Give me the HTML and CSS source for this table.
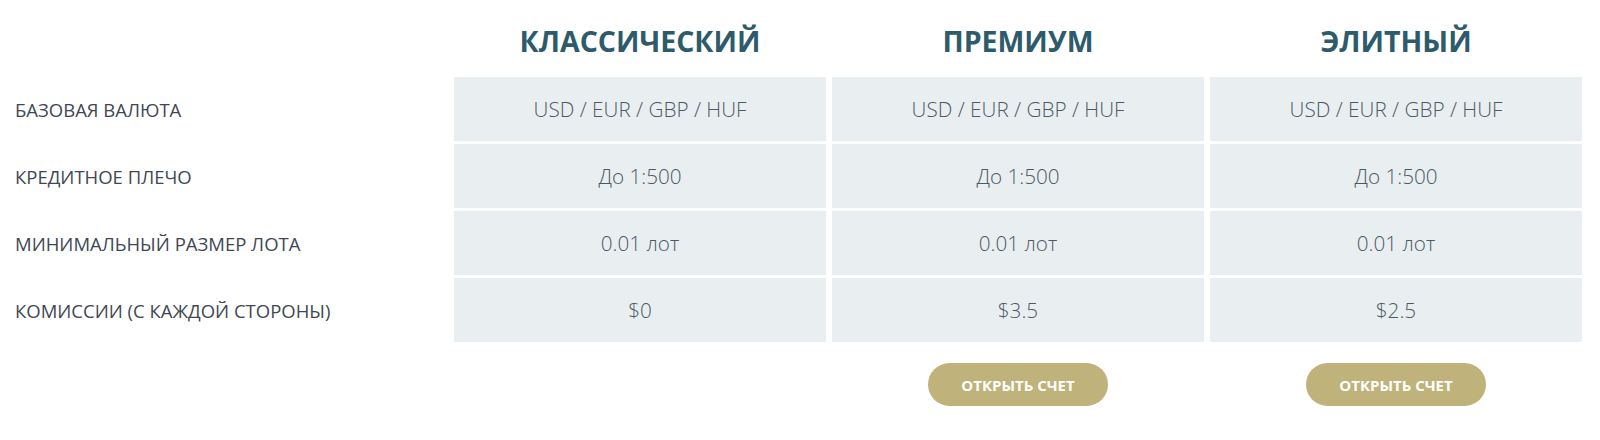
FILE: index.html
```html
<!DOCTYPE html>
<html lang="ru">
<head>
<meta charset="utf-8">
<title>Типы счетов</title>
<link rel="stylesheet" href="styles.css">
</head>
<body>
<div class="table">
  <div class="corner"></div>
  <div class="head">КЛАССИЧЕСКИЙ</div>
  <div class="head">ПРЕМИУМ</div>
  <div class="head">ЭЛИТНЫЙ</div>

  <div class="label">БАЗОВАЯ ВАЛЮТА</div>
  <div class="cell">USD / EUR / GBP / HUF</div>
  <div class="cell">USD / EUR / GBP / HUF</div>
  <div class="cell">USD / EUR / GBP / HUF</div>

  <div class="label">КРЕДИТНОЕ ПЛЕЧО</div>
  <div class="cell">До 1:500</div>
  <div class="cell">До 1:500</div>
  <div class="cell">До 1:500</div>

  <div class="label">МИНИМАЛЬНЫЙ РАЗМЕР ЛОТА</div>
  <div class="cell">0.01 лот</div>
  <div class="cell">0.01 лот</div>
  <div class="cell">0.01 лот</div>

  <div class="label">КОМИССИИ (С КАЖДОЙ СТОРОНЫ)</div>
  <div class="cell">$0</div>
  <div class="cell">$3.5</div>
  <div class="cell">$2.5</div>

  <div class="corner"></div>
  <div class="action"></div>
  <div class="action"><a class="btn" href="#">ОТКРЫТЬ СЧЕТ</a></div>
  <div class="action"><a class="btn" href="#">ОТКРЫТЬ СЧЕТ</a></div>
</div>
</body>
</html>
```
FILE: styles.css
```css
html, body {
  margin: 0;
  padding: 0;
  background: #ffffff;
}

body {
  font-family: "Open Sans", "Liberation Sans", sans-serif;
}

.table {
  display: grid;
  grid-template-columns: 448px repeat(3, 372px);
  grid-template-rows: 74px repeat(4, 64px) auto;
  column-gap: 6px;
  row-gap: 3px;
}

.head {
  box-sizing: border-box;
  padding-top: 22px;
  text-align: center;
  font-size: 28.5px;
  font-weight: 700;
  color: #2d5b6b;
  line-height: normal;
}

.label {
  display: flex;
  align-items: center;
  padding-left: 15px;
  font-size: 18.5px;
  font-weight: 400;
  color: #3f4852;
}

.cell {
  display: flex;
  align-items: center;
  justify-content: center;
  background: #e9eff0;
  font-size: 20.7px;
  font-weight: 300;
  color: #4c5866;
}

.action {
  display: flex;
  justify-content: center;
  padding-top: 18px;
}

.btn {
  display: flex;
  align-items: center;
  justify-content: center;
  width: 180px;
  height: 43px;
  border-radius: 22px;
  background: #bfb27a;
  color: #ffffff;
  font-size: 15px;
  font-weight: 700;
  text-decoration: none;
}
```
